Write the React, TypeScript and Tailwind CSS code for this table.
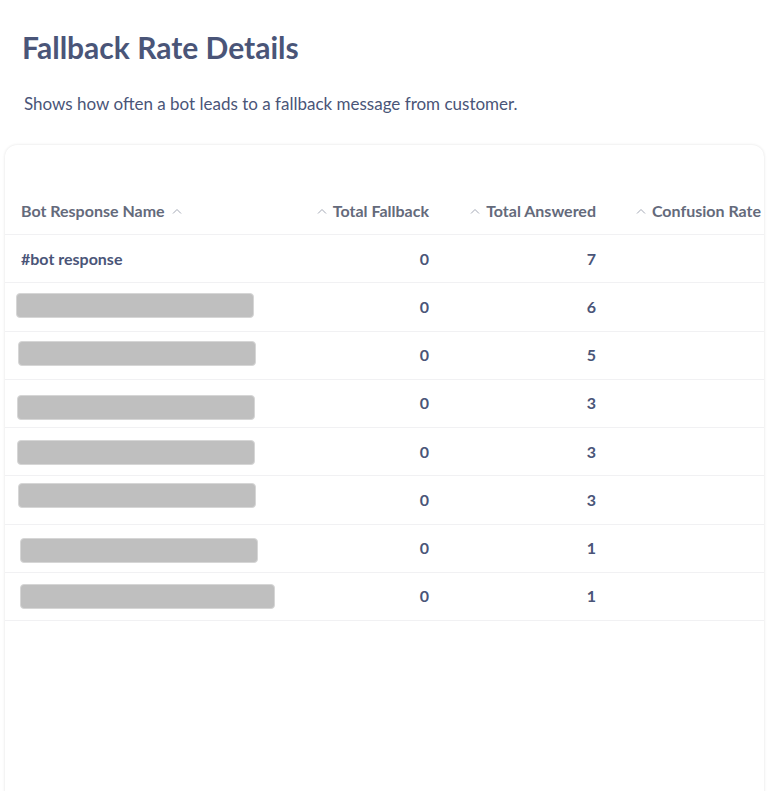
const rows = [
  { name: "#bot response", fallback: 0, answered: 7 },
  { bar: { top: 11, left: 11, width: 238 }, fallback: 0, answered: 6 },
  { bar: { top: 10, left: 13, width: 238 }, fallback: 0, answered: 5 },
  { bar: { top: 16, left: 12, width: 238 }, fallback: 0, answered: 3 },
  { bar: { top: 13, left: 12, width: 238 }, fallback: 0, answered: 3 },
  { bar: { top: 8, left: 13, width: 238 }, fallback: 0, answered: 3 },
  { bar: { top: 14, left: 15, width: 238 }, fallback: 0, answered: 1 },
  { bar: { top: 12, left: 15, width: 255 }, fallback: 0, answered: 1 },
];

const SortIcon = () => (
  <svg width="10" height="6" viewBox="0 0 10 6" fill="none" className="shrink-0">
    <path d="M1 5.5 L5 1.5 L9 5.5" stroke="#a3a8b5" strokeWidth="1" />
  </svg>
);

const cols = "grid grid-cols-[290px_150px_167px_165px]";

export default function App() {
  return (
    <div className="min-h-screen bg-white font-['Lato',sans-serif] text-[#4a5578]">
      <h1 className="pl-[22px] pt-[28px] text-[30px] font-bold leading-[38px] text-[#4a5578]">
        Fallback Rate Details
      </h1>
      <p className="pl-[24px] pt-[27px] text-[17px] leading-[22px] text-[#4a5578]">
        Shows how often a bot leads to a fallback message from customer.
      </p>

      <div className="ml-[5px] mt-[30px] h-[700px] w-[759px] overflow-hidden rounded-[12px] bg-white shadow-[0_0_3px_rgba(0,0,0,0.12)]">
        <div className="pt-[43px]">
          {/* header */}
          <div className={`${cols} h-[47px] border-b border-[#f1f1f3] text-[16px] font-bold text-[#646a7b]`}>
            <div className="flex items-center gap-[7px] pl-[16px]">
              Bot Response Name
              <SortIcon />
            </div>
            <div className="flex items-center justify-end gap-[6px] pr-[16px]">
              <SortIcon />
              Total Fallback
            </div>
            <div className="flex items-center justify-end gap-[6px] pr-[16px]">
              <SortIcon />
              Total Answered
            </div>
            <div className="flex items-center justify-end gap-[6px] pr-[16px] whitespace-nowrap">
              <SortIcon />
              Confusion Rate
            </div>
          </div>

          {rows.map((r, i) => (
            <div
              key={i}
              className={`${cols} h-[48.25px] border-b border-[#f1f1f3] text-[16px] font-bold text-[#4a5578]`}
            >
              {r.bar ? (
                <div style={{ paddingTop: r.bar.top - 1, paddingLeft: r.bar.left }}>
                  <div
                    className="h-[25px] rounded-[4px] border border-[#d6d6d6] bg-[#bfbfbf]"
                    style={{ width: r.bar.width }}
                  />
                </div>
              ) : (
                <div className="flex items-center pl-[16px]">{r.name}</div>
              )}
              <div className="flex items-center justify-end pr-[16px]">{r.fallback}</div>
              <div className="flex items-center justify-end pr-[16px]">{r.answered}</div>
              <div />
            </div>
          ))}
        </div>
      </div>
    </div>
  );
}
